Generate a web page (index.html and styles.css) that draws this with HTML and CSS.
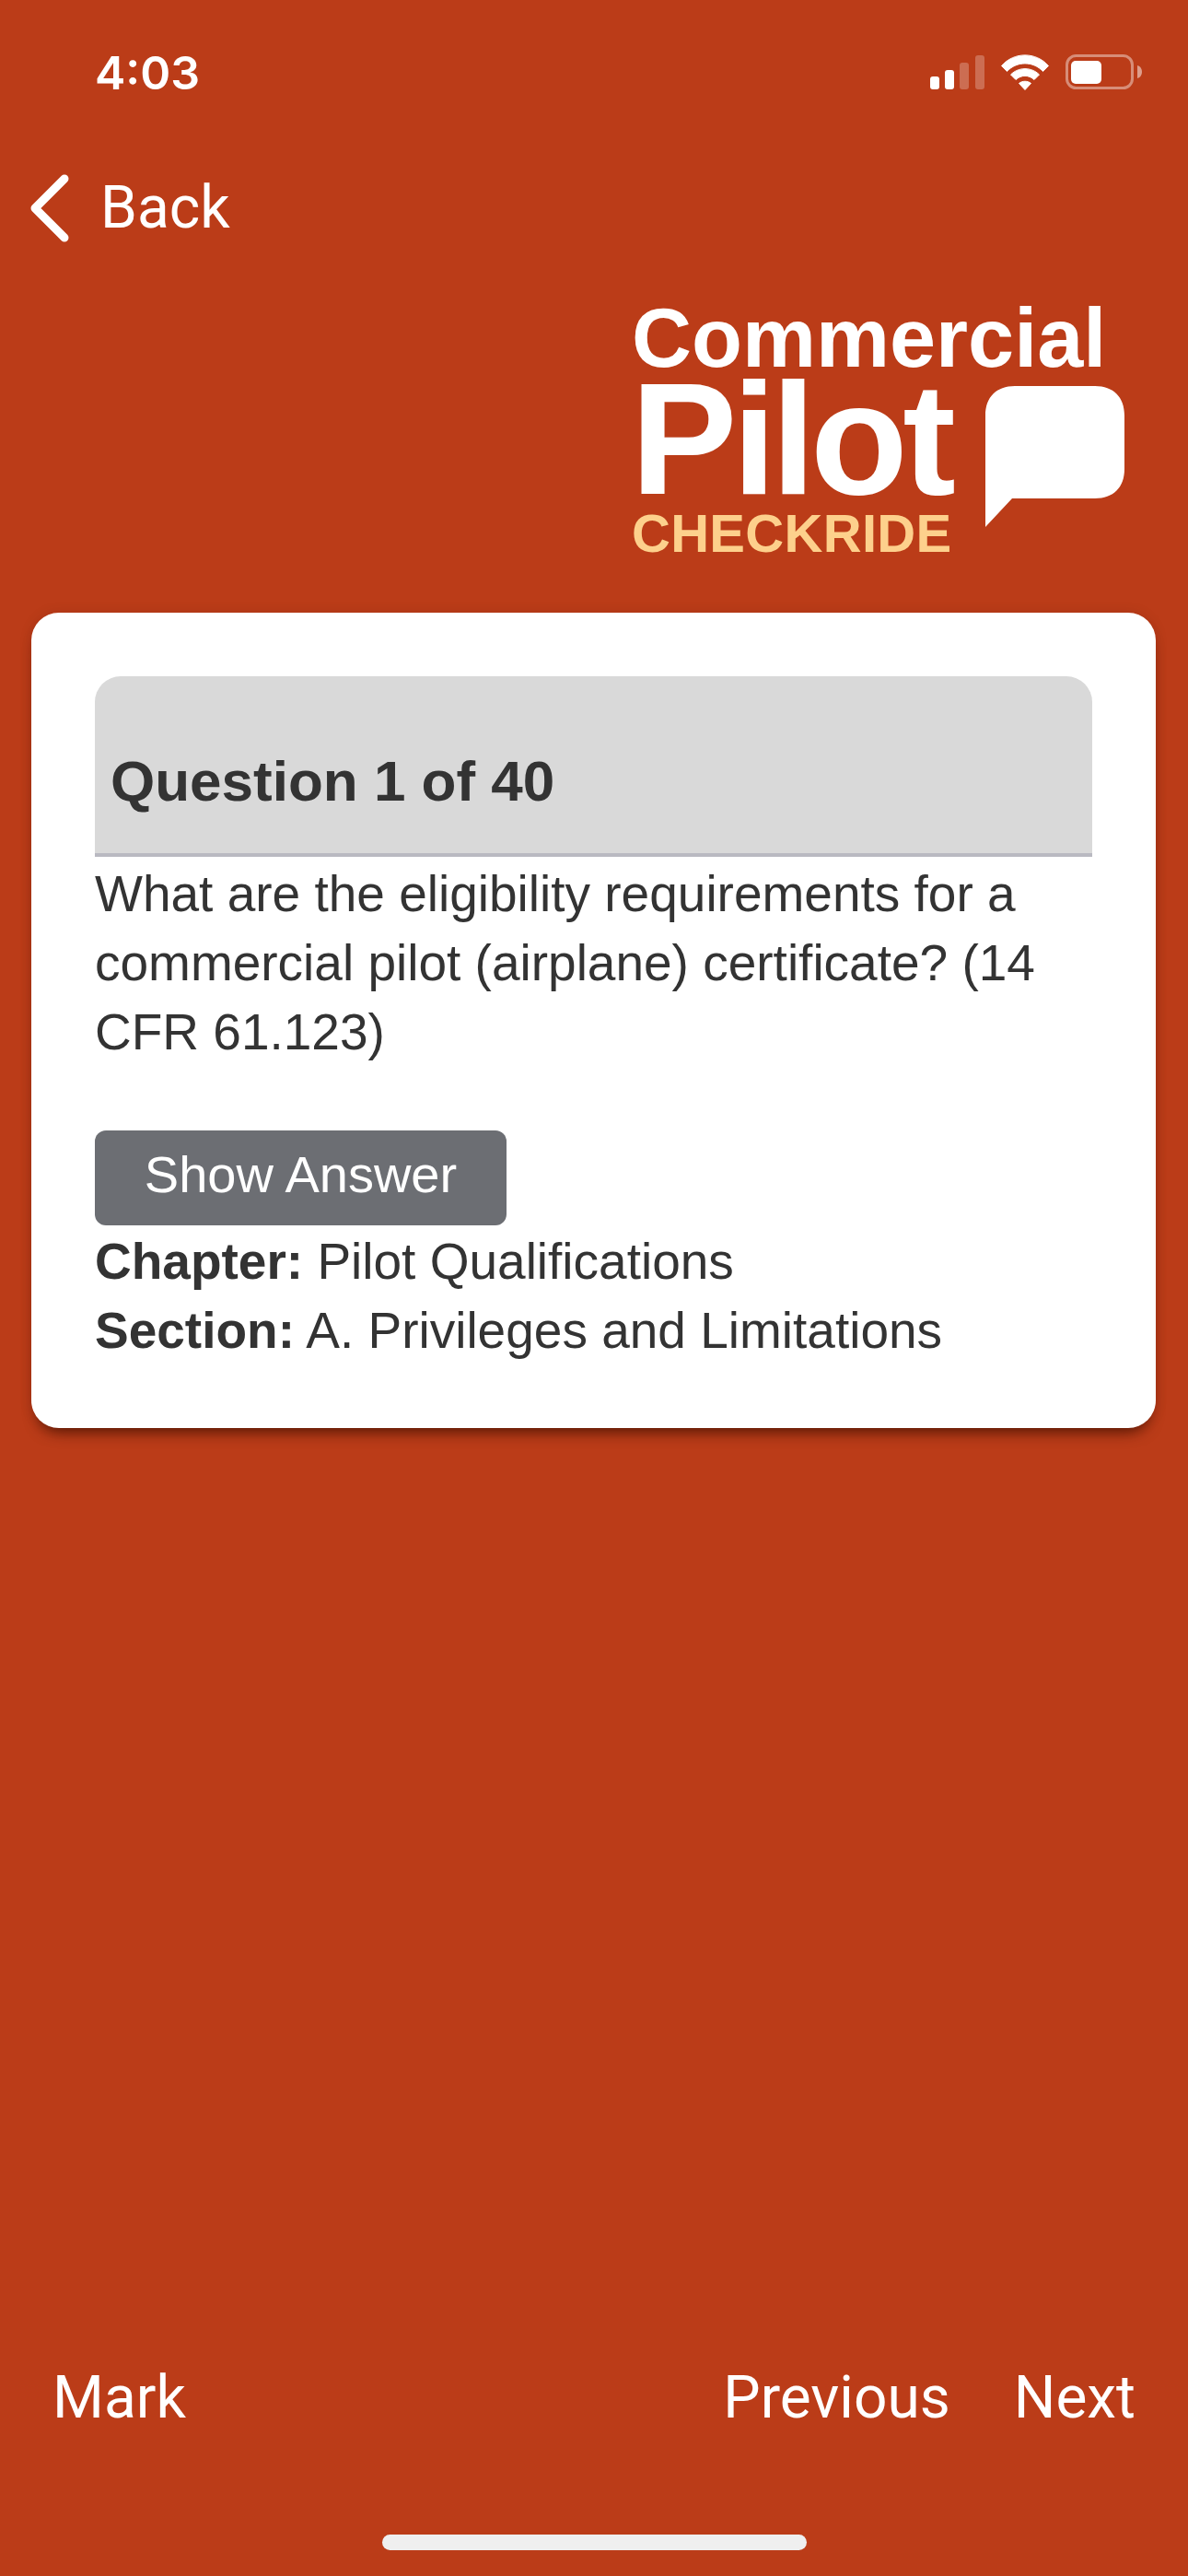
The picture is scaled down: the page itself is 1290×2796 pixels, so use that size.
FILE: index.html
```html
<!DOCTYPE html>
<html lang="en">
<head>
<meta charset="utf-8">
<title>Commercial Pilot Checkride</title>
<link rel="stylesheet" href="styles.css">
</head>
<body>
<div class="screen">
  <header class="status">
    <span class="clock">4:03</span>
    <div class="status-icons">
      <svg class="signal" width="59" height="38" viewBox="0 0 59 38">
        <rect x="0" y="24" width="10" height="14" rx="3" fill="#fff"/>
        <rect x="16" y="17" width="10" height="21" rx="3" fill="#fff"/>
        <rect x="32" y="9" width="10" height="29" rx="3" fill="#fff" fill-opacity=".25"/>
        <rect x="49" y="1" width="10" height="37" rx="3" fill="#fff" fill-opacity=".25"/>
      </svg>
      <svg class="wifi" width="52" height="39" viewBox="0 0 52 39">
        <path d="M0.500 12.500C14 -3 38 -3 51.500 12.500L45.500 18.500C35 7 17 7 6.500 18.500Z" fill="#fff" stroke="#fff" stroke-width="1" stroke-linejoin="round"/>
        <path d="M10.500 22C19 13.500 33 13.500 41.500 22L36 27.500C30 22 22 22 16 27.500Z" fill="#fff" stroke="#fff" stroke-width="1" stroke-linejoin="round"/>
        <path d="M26 38.500L19.500 31.500C23 28.500 29 28.500 32.500 31.500Z" fill="#fff" stroke="#fff" stroke-width="1" stroke-linejoin="round"/>
      </svg>
      <svg class="battery" width="84" height="38" viewBox="0 0 84 38">
        <rect x="1.500" y="1.500" width="71" height="35" rx="10" fill="none" stroke="#fff" stroke-opacity=".42" stroke-width="3"/>
        <rect x="6" y="7" width="33" height="25" rx="5" fill="#fff"/>
        <path d="M78 12C81.500 13 83 16 83 19S81.500 25 78 26Z" fill="#fff" fill-opacity=".5"/>
      </svg>
    </div>
  </header>

  <nav class="back">
    <svg class="chevron" width="44" height="74" viewBox="0 0 44 74">
      <path d="M38 5L6 37L38 69" fill="none" stroke="#fff" stroke-width="9" stroke-linecap="round" stroke-linejoin="round"/>
    </svg>
    <span>Back</span>
  </nav>

  <div class="brand">
    <div class="logo">
      <div class="logo-top">Commercial</div>
      <div class="logo-row">
        <div class="logo-words">
          <div class="logo-main">Pilot</div>
          <div class="logo-sub">CHECKRIDE</div>
        </div>
        <svg class="bubble" width="151" height="153" viewBox="0 0 151 153">
          <path d="M32 0H119C139 0 151 12 151 32V90C151 110 139 122 119 122H29L0 153V32C0 12 12 0 32 0Z" fill="#fff"/>
        </svg>
      </div>
    </div>
  </div>

  <main class="card">
    <h1 class="card-title">Question 1 of 40</h1>
    <p class="question">What are the eligibility requirements for a commercial pilot (airplane) certificate? (14 CFR 61.123)</p>
    <button class="show-answer" type="button">Show Answer</button>
    <p class="meta"><b>Chapter:</b> Pilot Qualifications</p>
    <p class="meta"><b>Section:</b> A. Privileges and Limitations</p>
  </main>

  <footer class="actions">
    <span>Mark</span>
    <div class="actions-right">
      <span>Previous</span>
      <span>Next</span>
    </div>
  </footer>

  <div class="home-bar"></div>
</div>
</body>
</html>
```

FILE: styles.css
```css
* {
  box-sizing: border-box;
}

html,
body {
  margin: 0;
  padding: 0;
}

.screen {
  width: 1290px;
  height: 2796px;
  background: #bb3c18;
  display: flex;
  flex-direction: column;
  font-family: "Liberation Sans", Arial, sans-serif;
  color: #fff;
}

.status {
  height: 120px;
  padding: 59px 49px 0 103px;
  display: flex;
  justify-content: space-between;
  align-items: flex-start;
}

.clock {
  font-family: Inter, "Liberation Sans", sans-serif;
  font-weight: 600;
  font-size: 50px;
  line-height: 40px;
}

.status-icons {
  display: flex;
  align-items: flex-start;
  gap: 18px;
}

.back {
  height: 170px;
  padding: 69px 0 0 32px;
  display: flex;
  align-items: flex-start;
  gap: 33px;
  font-family: Roboto, sans-serif;
  font-weight: 400;
  font-size: 64px;
  line-height: 74px;
}

.brand {
  height: 375px;
  padding: 35px 0 0 686px;
}

.logo {
  font-weight: 700;
}

.logo-top {
  font-size: 90px;
  line-height: 84px;
}

.logo-row {
  display: flex;
  align-items: flex-start;
  gap: 36px;
}

.logo-main {
  margin-left: -1px;
  font-size: 173px;
  line-height: 134px;
  letter-spacing: -5.500px;
}

.logo-sub {
  font-size: 58px;
  line-height: 72px;
  letter-spacing: 0.300px;
  color: #fdd08c;
}

.bubble {
  margin-top: 10px;
}

.card {
  width: 1221px;
  height: 885px;
  margin-left: 34px;
  padding: 69px 69px 0;
  background: #fff;
  border-radius: 30px;
  box-shadow: 0 12px 16px -8px rgba(60, 15, 0, 0.8), 0 0 14px rgba(60, 15, 0, 0.12);
  color: #333;
  font-size: 55px;
  line-height: 75px;
}

.card-title {
  margin: 0;
  height: 196px;
  padding: 76px 17px 0;
  background: #d9d9d9;
  border-bottom: 4px solid #b9b9c1;
  border-radius: 28px 28px 0 0;
  font-size: 62px;
  line-height: 75px;
  font-weight: 700;
}

.question {
  margin: 3px 0 69px;
}

.show-answer {
  display: block;
  width: 447px;
  height: 103px;
  padding: 0 0 8px;
  border: 0;
  border-radius: 12px;
  background: #6c6e73;
  color: #fff;
  font: inherit;
  font-size: 56px;
  margin-bottom: 2px;
}

.meta {
  margin: 0;
}

.actions {
  margin-top: auto;
  padding: 0 57px;
  height: 80px;
  display: flex;
  justify-content: space-between;
  font-family: Roboto, sans-serif;
  font-weight: 400;
  font-size: 64px;
  line-height: 80px;
}

.actions-right {
  display: flex;
  gap: 69px;
}

.home-bar {
  width: 461px;
  height: 17px;
  margin: 108px auto 28px;
  border-radius: 9px;
  background: #efefef;
}
```
